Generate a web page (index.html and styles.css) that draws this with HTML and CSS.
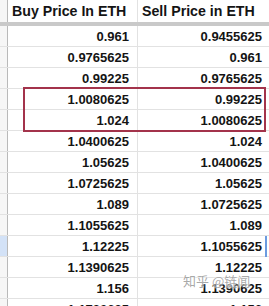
FILE: index.html
```html
<!DOCTYPE html>
<html>
<head>
<meta charset="utf-8">
<link rel="stylesheet" href="styles.css">
</head>
<body>
<div class="sheet">
  <div class="row head"><div class="rh"></div><div class="c">Buy Price In ETH</div><div class="c">Sell Price in ETH</div></div>
  <div class="freeze"></div>
  <div class="row"><div class="rh"></div><div class="c num">0.961</div><div class="c num">0.9455625</div></div>
  <div class="row"><div class="rh"></div><div class="c num">0.9765625</div><div class="c num">0.961</div></div>
  <div class="row"><div class="rh"></div><div class="c num">0.99225</div><div class="c num">0.9765625</div></div>
  <div class="row"><div class="rh"></div><div class="c num">1.0080625</div><div class="c num">0.99225</div></div>
  <div class="row"><div class="rh"></div><div class="c num">1.024</div><div class="c num">1.0080625</div></div>
  <div class="row"><div class="rh"></div><div class="c num">1.0400625</div><div class="c num">1.024</div></div>
  <div class="row"><div class="rh"></div><div class="c num">1.05625</div><div class="c num">1.0400625</div></div>
  <div class="row"><div class="rh"></div><div class="c num">1.0725625</div><div class="c num">1.05625</div></div>
  <div class="row"><div class="rh"></div><div class="c num">1.089</div><div class="c num">1.0725625</div></div>
  <div class="row"><div class="rh"></div><div class="c num">1.1055625</div><div class="c num">1.089</div></div>
  <div class="row sel"><div class="rh"></div><div class="c num">1.12225</div><div class="c num">1.1055625</div></div>
  <div class="row"><div class="rh"></div><div class="c num">1.1390625</div><div class="c num">1.12225</div></div>
  <div class="row"><div class="rh"></div><div class="c num">1.156</div><div class="c num">1.1390625</div></div>
  <div class="row"><div class="rh"></div><div class="c num">1.1730625</div><div class="c num">1.156</div></div>
  <div class="redbox"></div>
  <div class="selmark"></div>
  <div class="watermark"><span class="zh">知乎</span> <span class="at">@链闻</span></div>
</div>
</body>
</html>
```
FILE: styles.css
```css
html, body {
  margin: 0;
  padding: 0;
  background: #ffffff;
}
.sheet {
  position: relative;
  width: 269px;
  height: 306px;
  overflow: hidden;
  font-family: "Liberation Sans", Arial, sans-serif;
  font-weight: bold;
  font-size: 13px;
  color: #141414;
}
.row {
  display: grid;
  grid-template-columns: 8px 130px 133px;
  height: 21px;
  box-sizing: border-box;
  border-bottom: 1px solid #e2e2e2;
}
.row.head {
  height: 22px;
  border-bottom: none;
}
.freeze {
  height: 4px;
  background: #c9c9c9;
}
.rh {
  background: #f6f6f6;
  border-right: 1px solid #b9b9b9;
}
.row.sel .rh {
  background: #d3e2f7;
}
.c {
  display: flex;
  align-items: center;
  padding: 0 5px;
  border-right: 1px solid #e2e2e2;
  white-space: nowrap;
}
.c.num {
  justify-content: flex-end;
  padding-right: 8px;
}
.row.head .c {
  padding-left: 4px;
  font-size: 14.2px;
}
.redbox {
  position: absolute;
  left: 23px;
  top: 87px;
  width: 243px;
  height: 45px;
  box-sizing: border-box;
  border: 2px solid #a3334b;
}
.selmark {
  position: absolute;
  left: 265px;
  top: 236px;
  width: 2px;
  height: 21px;
  background: #6b9be0;
}
.watermark {
  position: absolute;
  left: 183px;
  top: 271px;
  font-family: "Noto Sans CJK SC", sans-serif;
  font-weight: normal;
  font-size: 13px;
  color: rgba(130, 130, 130, 0.7);
  text-shadow: 0 0 2px #fff, 0 0 2px #fff;
}
```
